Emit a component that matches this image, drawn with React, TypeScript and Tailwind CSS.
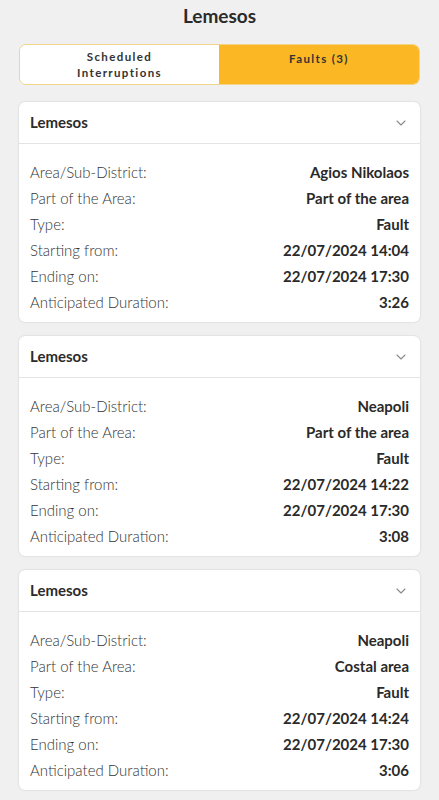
import { ChevronDown } from "lucide-react";

const faults = [
  {
    area: "Agios Nikolaos",
    part: "Part of the area",
    start: "22/07/2024 14:04",
    end: "22/07/2024 17:30",
    duration: "3:26",
  },
  {
    area: "Neapoli",
    part: "Part of the area",
    start: "22/07/2024 14:22",
    end: "22/07/2024 17:30",
    duration: "3:08",
  },
  {
    area: "Neapoli",
    part: "Costal area",
    start: "22/07/2024 14:24",
    end: "22/07/2024 17:30",
    duration: "3:06",
  },
];

function Row({ label, value }: { label: string; value: string }) {
  return (
    <div className="flex items-center justify-between h-[26px]">
      <span className="font-light text-[#333]">{label}</span>
      <span className="font-bold text-[#2a2a2a]">{value}</span>
    </div>
  );
}

export default function App() {
  return (
    <main
      className="min-h-[800px] bg-[#f0f0f0] px-[19px] pb-3"
      style={{ fontFamily: "Lato, 'Open Sans', sans-serif" }}
    >
      <h1 className="text-center pt-[5px] h-[44px] text-[19px] font-bold text-[#2b2b2b] leading-[22px]">
        Lemesos
      </h1>
      <div className="flex h-[41px] rounded-[7px] border border-[#f2d58a] overflow-hidden text-[11.5px] font-bold tracking-[0.12em] text-[#333]">
        <div className="w-[199px] bg-white flex items-center justify-center text-center leading-[16px]">
          Scheduled
          <br />
          Interruptions
        </div>
        <div className="flex-1 bg-[#fbb824] flex justify-center pt-[5px]">
          Faults (3)
        </div>
      </div>
      <div className="mt-[17px] flex flex-col gap-[14px]">
        {faults.map((f, i) => (
          <section
            key={i}
            className="bg-white rounded-[6px] shadow-[0_0_2px_rgba(0,0,0,0.18)]"
          >
            <div className="flex items-center justify-between h-[42px] px-[11px] border-b border-[#e4e4e4]">
              <span className="text-[15px] font-bold text-[#2b2b2b]">Lemesos</span>
              <ChevronDown size={16} strokeWidth={1.6} className="text-[#8a8a8a]" />
            </div>
            <div className="px-[11px] pt-[15px] pb-[7px] text-[15px]">
              <Row label="Area/Sub-District:" value={f.area} />
              <Row label="Part of the Area:" value={f.part} />
              <Row label="Type:" value="Fault" />
              <Row label="Starting from:" value={f.start} />
              <Row label="Ending on:" value={f.end} />
              <Row label="Anticipated Duration:" value={f.duration} />
            </div>
          </section>
        ))}
      </div>
    </main>
  );
}
